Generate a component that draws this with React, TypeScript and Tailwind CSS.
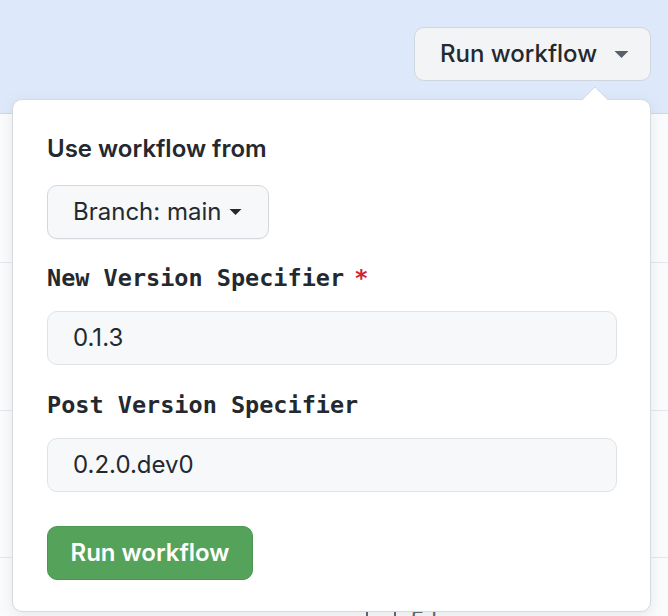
const Caret = ({ className }: { className: string }) => (
  <svg viewBox="0 0 16 8" className={className} fill="currentColor">
    <path d="M0 0h16L8 8z" />
  </svg>
);

const sans = "font-['Inter','Liberation_Sans',sans-serif]";
const mono = "font-['DejaVu_Sans_Mono','Liberation_Mono',monospace]";

const Field = ({ label, value, required, top }: { label: string; value: string; required?: boolean; top: string }) => (
  <div className={top}>
    <div className={`${mono} flex items-center h-[36px] text-[23.5px] font-bold text-[#24292f]`}>
      <span>{label}</span>
      {required && <span className="ml-[10px] text-[#cf222e]">*</span>}
    </div>
    <div className="mt-[14px] flex h-[54px] w-[570px] items-center rounded-[10px] border border-[#dfe3e8] bg-[#f6f8fa] px-[25px] text-[24px] text-[#24292f]">
      {value}
    </div>
  </div>
);

export default function App() {
  return (
    <div className={`${sans} relative h-[616px] w-[668px] overflow-hidden bg-[#fafbfc]`}>
      <header className="flex h-[114px] justify-end border-b border-[#c9d9ef] bg-[#dde9fa] pr-[17px] pt-[27px]">
        <button className="flex h-[54px] w-[237px] items-center rounded-[10px] border border-[#cfd6de] bg-[#f3f4f6] pl-[25px] text-[24px] font-medium text-[#24292f]">
          Run workflow
          <Caret className="ml-[17px] h-[7px] w-[15px] text-[#57606a]" />
        </button>
      </header>
      <div className="h-[149px] border-b border-[#e4e7eb]" />
      <div className="h-[148px] border-b border-[#e4e7eb]" />
      <div className="h-[147px] border-b border-[#e4e7eb]" />
      <div className="flex items-start gap-[14px] pl-[366px] pt-[45px] text-[24px] text-[#57606a]">
        <span className="mt-[2px] h-[20px] w-[30px] rounded-[3px] border-2 border-[#57606a]" />
        <span>5 hours ago</span>
      </div>

      <div className="absolute left-[12px] top-[99px] h-[513px] w-[639px] rounded-[10px] border border-[#d5dae0] bg-white pl-[34px] pt-[31px] shadow-[0_4px_14px_rgba(140,149,159,0.18)]">
        <svg className="absolute left-[569px] top-[-14px] h-[14px] w-[26px]" viewBox="0 0 26 14">
          <path d="M0 14L13 1L26 14" fill="white" stroke="#d5dae0" strokeWidth="1" />
          <path d="M1 14.5h24" stroke="white" strokeWidth="2" />
        </svg>
        <div className="flex h-[36px] items-center text-[24px] font-semibold text-[#24292f]">Use workflow from</div>
        <button className="mt-[18px] flex h-[54px] w-[222px] items-center rounded-[10px] border border-[#d3d8de] bg-[#f6f8fa] pl-[25px] text-[24px] text-[#24292f] shadow-[0_1px_0_rgba(27,31,36,0.04)]">
          Branch: main
          <Caret className="ml-[8px] h-[6px] w-[13px] text-[#24292f]" />
        </button>
        <Field top="mt-[22px]" label="New Version Specifier" value="0.1.3" required />
        <Field top="mt-[23px]" label="Post Version Specifier" value="0.2.0.dev0" />
        <button className="mt-[34px] flex h-[54px] w-[206px] items-center justify-center rounded-[10px] border border-[#4b9651] bg-[#55a35a] text-[24px] font-semibold text-white">
          Run workflow
        </button>
      </div>
    </div>
  );
}
